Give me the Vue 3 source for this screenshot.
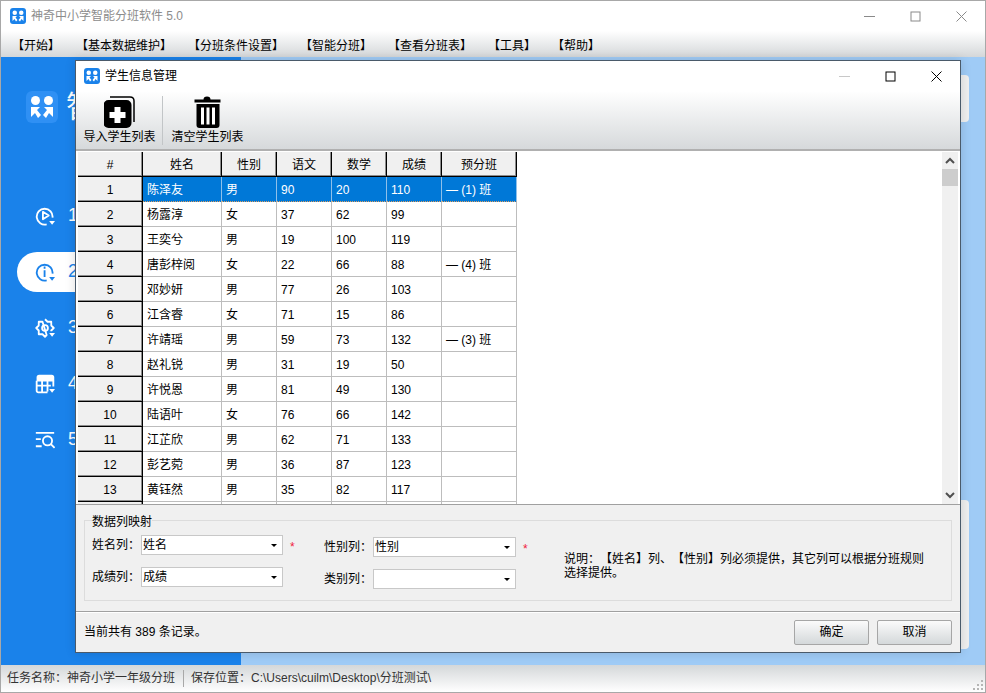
<script setup>
// Student information dialog on top of the main class-assignment window.
const menus = ["【开始】", "【基本数据维护】", "【分班条件设置】", "【智能分班】", "【查看分班表】", "【工具】", "【帮助】"];

const navItems = [
    { no: "1", icon: "play" },
    { no: "2", icon: "info", active: true },
    { no: "3", icon: "gear" },
    { no: "4", icon: "table" },
    { no: "5", icon: "search" },
];

const columns = ["姓名", "性别", "语文", "数学", "成绩", "预分班"];
const columnWidths = [65, 79, 55, 55, 55, 55, 75];

const students = [
    ["陈泽友", "男", "90", "20", "110", "— (1) 班"],
    ["杨露淳", "女", "37", "62", "99", ""],
    ["王奕兮", "男", "19", "100", "119", ""],
    ["唐彭梓阅", "女", "22", "66", "88", "— (4) 班"],
    ["邓妙妍", "男", "77", "26", "103", ""],
    ["江含睿", "女", "71", "15", "86", ""],
    ["许靖瑶", "男", "59", "73", "132", "— (3) 班"],
    ["赵礼锐", "男", "31", "19", "50", ""],
    ["许悦恩", "男", "81", "49", "130", ""],
    ["陆语叶", "女", "76", "66", "142", ""],
    ["江芷欣", "男", "62", "71", "133", ""],
    ["彭艺菀", "男", "36", "87", "123", ""],
    ["黄钰然", "男", "35", "82", "117", ""],
    ["", "", "", "", "", ""],
];
</script>

<template>
    <div class="window">
        <header class="titlebar">
            <svg class="app-icon" viewBox="0 0 32 32">
                <rect width="32" height="32" rx="6" fill="#1a82ea" />
                <circle cx="9.5" cy="9.5" r="4.5" fill="#fff" />
                <circle cx="22.5" cy="9.5" r="4.5" fill="#fff" />
                <path d="M5 16h9l-3 3 4 5-3 3-3-5-4 4z M27 16h-9l3 3-4 5 3 3 3-5 4 4z" fill="#fff" />
            </svg>
            <span class="title-text">神奇中小学智能分班软件 5.0</span>
            <div class="win-buttons">
                <svg viewBox="0 0 11 11"><path d="M0 5.5h11" stroke="#8a8a8a" /></svg>
                <svg viewBox="0 0 11 11"><rect x="1" y="1" width="9" height="9" fill="none" stroke="#8a8a8a" /></svg>
                <svg viewBox="0 0 11 11"><path d="M.5.5l10 10M10.5.5l-10 10" stroke="#8a8a8a" /></svg>
            </div>
        </header>

        <nav class="menubar">
            <span v-for="menu in menus" :key="menu" class="menu-item">{{ menu }}</span>
        </nav>

        <main class="workspace">
            <aside class="sidebar">
                <div class="brand">
                    <svg class="brand-icon" viewBox="0 0 32 32">
                        <rect width="32" height="32" rx="6" fill="#2f90f4" />
                        <circle cx="9.5" cy="9.5" r="4.5" fill="#fff" />
                        <circle cx="22.5" cy="9.5" r="4.5" fill="#fff" />
                        <path d="M5 16h9l-3 3 4 5-3 3-3-5-4 4z M27 16h-9l3 3-4 5 3 3 3-5 4 4z" fill="#fff" />
                    </svg>
                    <span class="brand-text">智能分班</span>
                </div>
                <ul class="nav">
                    <li v-for="item in navItems" :key="item.no" class="nav-item" :class="{ active: item.active }">
                        <svg class="nav-icon" viewBox="0 0 24 24" fill="none" stroke="currentColor" stroke-width="2.2" stroke-linejoin="round">
                            <template v-if="item.icon === 'play'">
                                <path d="M21 14a9.5 9.5 0 1 0-7 8" />
                                <path d="M9.5 7l7 4.5-7 4.5z" />
                                <path d="M17 18h7l-3.5 4.5z" fill="currentColor" stroke="none" />
                            </template>
                            <template v-else-if="item.icon === 'info'">
                                <path d="M21 14a9.5 9.5 0 1 0-7 8" />
                                <path d="M11.5 10v8M11.5 5.5v2.5" />
                                <path d="M17 18h7l-3.5 4.5z" fill="currentColor" stroke="none" />
                            </template>
                            <template v-else-if="item.icon === 'gear'">
                                <path d="M12 1.500l3 3h4.500v4.500l3 3-3 3v1M14 20.500l-2 2-3-3H4.500v-4.500l-3-3 3-3V4.500H9z" />
                                <circle cx="12" cy="12" r="3.500" />
                                <path d="M17 18h7l-3.500 4.500z" fill="currentColor" stroke="none" />
                            </template>
                            <template v-else-if="item.icon === 'table'">
                                <path d="M3 8V4a2 2 0 0 1 2-2h15a2 2 0 0 1 2 2v4z" fill="currentColor" />
                                <path d="M22 15V8M15 22H4a2 2 0 0 1-2-2V8M2 14h17M8.500 8v14M15 8v13" />
                                <path d="M17 18h7l-3.500 4.500z" fill="currentColor" stroke="none" />
                            </template>
                            <template v-else>
                                <path d="M1 3.500h22M1 11h6M1 19.500h7" />
                                <circle cx="15" cy="13" r="5.500" />
                                <path d="M19 17l4.500 4.500" />
                            </template>
                        </svg>
                        <span class="nav-no">{{ item.no }}</span>
                    </li>
                </ul>
            </aside>
            <section class="content">
                <div class="card card-top"></div>
                <div class="card card-bottom"></div>
            </section>

            <!-- floating dialog window -->
            <div class="dialog">
                <div class="dialog-title">
                    <svg class="app-icon" viewBox="0 0 32 32">
                        <rect width="32" height="32" rx="6" fill="#1a82ea" />
                        <circle cx="9.5" cy="9.5" r="4.5" fill="#fff" />
                        <circle cx="22.5" cy="9.5" r="4.5" fill="#fff" />
                        <path d="M5 16h9l-3 3 4 5-3 3-3-5-4 4z M27 16h-9l3 3-4 5 3 3 3-5 4 4z" fill="#fff" />
                    </svg>
                    <span>学生信息管理</span>
                    <div class="win-buttons dialog-buttons">
                        <svg viewBox="0 0 11 11"><path d="M0 5.500h11" stroke="#c8c8c8" /></svg>
                        <svg viewBox="0 0 11 11"><rect x="1" y="1" width="9" height="9" fill="none" stroke="#000" /></svg>
                        <svg viewBox="0 0 11 11"><path d="M.5.5l10 10M10.500.5l-10 10" stroke="#000" /></svg>
                    </div>
                </div>

                <div class="toolbar">
                    <button class="tool" type="button">
                        <svg class="tool-icon" viewBox="1 0 32 32">
                            <path d="M7 1h20q4 0 4 4v21" fill="none" stroke="#000" stroke-width="1.500" />
                            <rect x="0.500" y="4" width="28" height="28" rx="5" fill="#000" />
                            <path d="M11.500 11h6v5h5v6h-5v5h-6v-5h-5v-6h5z" fill="#fff" />
                        </svg>
                        <span>导入学生列表</span>
                    </button>
                    <i class="tool-sep"></i>
                    <button class="tool" type="button">
                        <svg class="tool-icon" viewBox="1 0 32 32">
                            <path d="M3.500 3.500h9a3.500 3 0 0 1 7 0h10v3h-26z" fill="#000" />
                            <path d="M5.500 8h23v21a3 3 0 0 1-3 3h-17a3 3 0 0 1-3-3z" fill="#000" />
                            <path d="M10 11.500h3v17h-3z M15.500 11.500h3v17h-3z M21 11.500h3v17h-3z" fill="#fff" />
                        </svg>
                        <span>清空学生列表</span>
                    </button>
                </div>

                <div class="grid-area">
                    <div class="grid-wrap">
                        <table class="grid">
                            <colgroup>
                                <col v-for="(w, i) in columnWidths" :key="i" :style="{ width: w + 'px' }" />
                            </colgroup>
                            <thead>
                                <tr>
                                    <th class="row-head">#</th>
                                    <th v-for="col in columns" :key="col">{{ col }}</th>
                                </tr>
                            </thead>
                            <tbody>
                                <tr v-for="(row, i) in students" :key="i" :class="{ selected: i === 0 }">
                                    <td class="row-head">{{ row[0] ? i + 1 : "" }}</td>
                                    <td v-for="(cell, j) in row" :key="j">{{ cell }}</td>
                                </tr>
                            </tbody>
                        </table>
                    </div>
                    <div class="scrollbar">
                        <svg viewBox="0 0 16 17"><path d="M4 11l4-4 4 4" fill="none" stroke="#505050" stroke-width="2" /></svg>
                        <div class="scroll-track"><div class="scroll-thumb"></div></div>
                        <svg viewBox="0 0 16 17"><path d="M4 6l4 4 4-4" fill="none" stroke="#505050" stroke-width="2" /></svg>
                    </div>
                </div>

                <div class="mapping">
                    <fieldset class="group">
                        <legend>数据列映射</legend>
                        <div class="fields">
                            <div class="field-col">
                                <label class="field">
                                    <span>姓名列：</span>
                                    <span class="combo">姓名<i class="caret"></i></span>
                                    <em>*</em>
                                </label>
                                <label class="field">
                                    <span>成绩列：</span>
                                    <span class="combo">成绩<i class="caret"></i></span>
                                </label>
                            </div>
                            <div class="field-col field-col-2">
                                <label class="field">
                                    <span>性别列：</span>
                                    <span class="combo">性别<i class="caret"></i></span>
                                    <em>*</em>
                                </label>
                                <label class="field">
                                    <span>类别列：</span>
                                    <span class="combo"><i class="caret"></i></span>
                                </label>
                            </div>
                            <p class="note">说明：【姓名】列、【性别】列必须提供，其它列可以根据分班规则选择提供。</p>
                        </div>
                    </fieldset>
                </div>

                <footer class="dialog-footer">
                    <span>当前共有 389 条记录。</span>
                    <div class="actions">
                        <button class="btn" type="button">确定</button>
                        <button class="btn" type="button">取消</button>
                    </div>
                </footer>
            </div>
        </main>

        <footer class="statusbar">
            <span>任务名称：神奇小学一年级分班</span>
            <i class="status-sep"></i>
            <span>保存位置：C:\Users\cuilm\Desktop\分班测试\</span>
            <svg class="grip" viewBox="0 0 11 11">
                <path d="M8 0h2v2H8z M4 4h2v2H4z M8 4h2v2H8z M0 8h2v2H0z M4 8h2v2H4z M8 8h2v2H8z" fill="#b5b5b5" />
            </svg>
        </footer>
    </div>
</template>

<style>
html,
body {
    margin: 0;
    background: #fff;
}
</style>

<style scoped>
.window {
    position: relative;
    width: 986px;
    height: 693px;
    box-sizing: border-box;
    border: 1px solid #a8a8a8;
    display: flex;
    flex-direction: column;
    overflow: hidden;
    font: 12px/1.2 "Liberation Sans", "Noto Sans CJK SC", sans-serif;
    color: #000;
    background: #fff;
    text-spacing-trim: space-all;
}

.titlebar {
    height: 30px;
    display: flex;
    align-items: center;
    padding-left: 9px;
    flex: none;
}

.app-icon {
    width: 16px;
    height: 16px;
    margin-right: 5px;
    flex: none;
}

.title-text {
    color: #8c8c8c;
}

.win-buttons {
    margin-left: auto;
    display: flex;
    gap: 35px;
    padding-right: 18px;
}

.win-buttons svg {
    width: 11px;
    height: 11px;
}

.menubar {
    height: 26px;
    flex: none;
    box-sizing: border-box;
    display: flex;
    align-items: center;
    padding: 4px 0 0 3px;
    background: linear-gradient(#fff, #d4d7d9);
}

.menu-item {
    padding: 0 8px;
}

.workspace {
    flex: 1;
    display: flex;
    position: relative;
    min-height: 0;
    background: #9fcbf6;
}

.sidebar {
    width: 240px;
    flex: none;
    background: #1a82ea;
    color: #fff;
}

.brand {
    display: flex;
    align-items: center;
    gap: 8px;
    padding: 34px 0 0 25px;
}

.brand-icon {
    width: 32px;
    height: 32px;
}

.brand-text {
    font-size: 30px;
    line-height: 32px;
}

.nav {
    list-style: none;
    margin: 73px 0 0 16px;
    padding: 0;
}

.nav-item {
    height: 40px;
    margin-bottom: 16px;
    display: flex;
    align-items: center;
    padding-left: 18px;
    border-radius: 20px 0 0 20px;
}

.nav-item.active {
    background: #fff;
    color: #1a82ea;
}

.nav-icon {
    width: 20px;
    height: 20px;
}

.nav-no {
    margin-left: 13px;
    font-size: 18px;
}

.content {
    flex: 1;
    position: relative;
}

.card {
    position: absolute;
    right: 16px;
    width: 40px;
    background: #efefef;
    border-radius: 4px;
}

.card-top {
    top: 18px;
    height: 47px;
}

.card-bottom {
    top: 443px;
    height: 149px;
}

.dialog {
    position: absolute;
    left: 74px;
    top: 3px;
    width: 886px;
    height: 593px;
    box-sizing: border-box;
    border: 1px solid #4a5a6a;
    display: flex;
    flex-direction: column;
    background: #f0f0f0;
    box-shadow: 0 0 10px rgba(0, 0, 0, 0.14);
}

.dialog-title {
    height: 30px;
    flex: none;
    display: flex;
    align-items: center;
    padding-left: 8px;
    background: #fff;
}

.toolbar {
    height: 60px;
    flex: none;
    display: flex;
    padding: 5px 0 0 4px;
    box-sizing: border-box;
    background: linear-gradient(#fff, #d6d9db);
    border-bottom: 2px solid #b0b0b0;
}

.tool {
    width: 79px;
    padding: 0;
    border: 0;
    background: none;
    font: inherit;
    display: flex;
    flex-direction: column;
    align-items: center;
    gap: 2px;
}

.tool-icon {
    width: 32px;
    height: 32px;
}

.tool-sep {
    width: 1px;
    height: 49px;
    margin: 0 5px 0 3px;
    background: #c2c5c7;
}

.grid-area {
    height: 353px;
    flex: none;
    display: flex;
    background: #fff;
    padding: 1px 2px 0;
    box-sizing: border-box;
}

.grid-wrap {
    flex: 1;
    overflow: hidden;
}

.grid {
    border-collapse: separate;
    border-spacing: 0;
    table-layout: fixed;
    width: 439px;
}

.grid th,
.grid td {
    height: 25px;
    padding: 2px 0 0 4px;
    box-sizing: border-box;
    border-right: 1px solid #bdbdbd;
    border-bottom: 1px solid #bdbdbd;
    font-weight: 400;
    text-align: left;
    white-space: nowrap;
    overflow: hidden;
}

.grid th,
.grid td.row-head {
    padding: 2px 0 0;
    text-align: center;
    background: #f0f0f0;
    border-right: 1px solid #000;
    border-bottom: 1px solid #000;
    box-shadow: inset -1px -1px 0 #8c8c8c;
}

.selected td:not(.row-head) {
    background: #0078d7;
    color: #fff;
    border-right-color: #8fc0ea;
    border-bottom: 1px dotted #e0a060;
}

.scrollbar {
    width: 16px;
    flex: none;
    display: flex;
    flex-direction: column;
    background: #f0f0f0;
}

.scrollbar svg {
    height: 17px;
    flex: none;
}

.scroll-track {
    flex: 1;
}

.scroll-thumb {
    height: 17px;
    background: #cdcdcd;
}

.mapping {
    flex: 1;
    padding: 8px 8px 10px;
    border-top: 1px solid #a0a0a0;
    box-sizing: border-box;
}

.group {
    margin: 0;
    padding: 0 7px;
    height: 88px;
    border: 1px solid #dcdcdc;
    box-sizing: border-box;
}

.group legend {
    padding: 0;
    position: relative;
    top: 2px;
}

.fields {
    display: flex;
    align-items: flex-start;
}

.field-col {
    width: 232px;
    display: flex;
    flex-direction: column;
    gap: 12px;
    padding-top: 8px;
}

.field-col-2 {
    padding-top: 10px;
}

.field {
    display: flex;
    align-items: center;
    height: 20px;
}

.field > span:first-child {
    width: 49px;
    flex: none;
}

.combo {
    position: relative;
    width: 139px;
    height: 18px;
    line-height: 18px;
    padding-left: 1px;
    background: #fff;
    border: 1px solid #c8c8c8;
}

.field-col-2 .combo {
    width: 140px;
}

.caret {
    position: absolute;
    right: 5px;
    top: 8px;
    border: 3px solid transparent;
    border-top: 3px solid #000;
    border-bottom: 0;
}

.field em {
    margin-left: 7px;
    padding-top: 4px;
    font-style: normal;
    color: #f0203c;
}

.note {
    margin: 25px 0 0 8px;
    width: 362px;
    line-height: 14px;
}

.dialog-footer {
    height: 41px;
    flex: none;
    box-sizing: border-box;
    border-top: 1px solid #a0a0a0;
    box-shadow: inset 0 1px 0 #fff;
    display: flex;
    align-items: center;
    justify-content: space-between;
    padding: 0 8px;
}

.actions {
    display: flex;
    gap: 8px;
}

.btn {
    width: 75px;
    height: 25px;
    padding: 0;
    font: inherit;
    border: 1px solid #a6a6a6;
    border-radius: 2px;
    background: linear-gradient(#fbfbfb, #d4d8da);
}

.statusbar {
    height: 27px;
    flex: none;
    display: flex;
    align-items: center;
    padding-left: 6px;
    position: relative;
    background: linear-gradient(#d4d7d9, #fff);
    color: #333;
}

.status-sep {
    width: 1px;
    height: 17px;
    margin: 0 7px 0 8px;
    background: #a8a8a8;
}

.grip {
    position: absolute;
    right: 1px;
    bottom: 1px;
    width: 11px;
    height: 11px;
}
</style>
